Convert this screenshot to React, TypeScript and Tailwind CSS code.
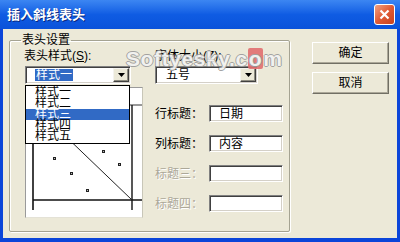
import React from 'react';

const FONT = "font-['Liberation_Sans','Noto_Sans_CJK_SC',sans-serif]";

const STYLES = ['样式一', '样式二', '样式三', '样式四', '样式五'];

const ROWS = [
  { label: '行标题：', value: '日期', disabled: false },
  { label: '列标题：', value: '内容', disabled: false },
  { label: '标题三：', value: '', disabled: true },
  { label: '标题四：', value: '', disabled: true },
];

function ArrowButton() {
  return (
    <div className="w-[16px] h-full shrink-0 bg-[#ECE9D8] border border-t-[#F4F3EE] border-l-[#F4F3EE] border-b-[#404040] border-r-[#404040] shadow-[inset_-1px_-1px_0_#8E8C80] flex items-center justify-center">
      <svg width="7" height="4" viewBox="0 0 7 4">
        <path d="M0 0h7L3.5 4z" fill="#000" />
      </svg>
    </div>
  );
}

function Combo({ width, children }: { width: string; children: React.ReactNode }) {
  return (
    <div
      className={`${width} h-[18px] bg-white border border-t-[#808080] border-l-[#808080] border-b-white border-r-white shadow-[inset_1px_1px_0_#404040,inset_-1px_-1px_0_#D4D0C8] p-[1px] flex items-stretch`}
    >
      <div className="flex-1 flex items-center text-[12px] leading-[12px]">{children}</div>
      <ArrowButton />
    </div>
  );
}

function Preview() {
  return (
    <svg width="116" height="129" viewBox="0 0 116 129" className="block">
      <line x1="7" y1="17" x2="116" y2="17" stroke="#333" strokeWidth="1" />
      <line x1="7" y1="17" x2="7" y2="122" stroke="#111" strokeWidth="1.6" />
      <line x1="106" y1="17" x2="106" y2="122" stroke="#111" strokeWidth="1.4" />
      <line x1="7" y1="112" x2="116" y2="112" stroke="#111" strokeWidth="1.4" />
      <line x1="7" y1="17" x2="106" y2="112" stroke="#222" strokeWidth="1" />
      {[
        [27, 69],
        [76, 62],
        [92, 75],
        [44, 84],
        [60, 101],
      ].map(([x, y], i) => (
        <g key={i} fill="#222">
          <rect x={x} y={y} width="3" height="3" />
          <rect x={x + 1} y={y + 1} width="1" height="1" fill="#bbb" />
        </g>
      ))}
    </svg>
  );
}

function Button({ children }: { children: React.ReactNode }) {
  return (
    <button className="w-[77px] h-[22px] bg-[#ECE9D8] border border-t-white border-l-white border-b-[#716F64] border-r-[#716F64] shadow-[inset_-1px_-1px_0_#ACA899] text-[12px] leading-[12px] text-black flex items-center justify-center">
      {children}
    </button>
  );
}

export default function App() {
  return (
    <div className={`${FONT} w-[400px] h-[242px] bg-[#0B45D9] flex flex-col overflow-hidden relative select-none`}>
      {/* title bar */}
      <div className="h-[29px] shrink-0 flex items-center justify-between pl-[7px] pr-[5px] bg-gradient-to-b from-[#3C86F2] via-[#0F5CE3] to-[#0A52DA]">
        <span className="text-white text-[13px] leading-[13px] font-bold [text-shadow:1px_1px_0_#0A2A80]">插入斜线表头</span>
        <div className="w-[21px] h-[21px] rounded-[3px] border border-white bg-gradient-to-br from-[#F0A080] via-[#E05A34] to-[#C8421F] flex items-center justify-center">
          <svg width="11" height="11" viewBox="0 0 11 11">
            <path d="M1.5 1.5l8 8M9.5 1.5l-8 8" stroke="white" strokeWidth="2.2" />
          </svg>
        </div>
      </div>

      {/* dialog body */}
      <div className="flex-1 mx-[3px] mb-[4px] bg-[#ECE9D8] flex items-start">
        <fieldset className="ml-[6px] mt-[4px] w-[281px] h-[199px] border border-[#A5A392] rounded-[2px] shadow-[inset_1px_1px_0_white,1px_1px_0_white]">
          <legend className="ml-[11px] px-[1px] text-[12px] leading-[14px] text-black">表头设置</legend>
          <div className="flex">
            {/* left column */}
            <div className="ml-[14px] w-[119px] flex flex-col">
              <div className="mt-[2px] h-[14px] text-[12px] leading-[14px]">
                表头样式(<u>S</u>):
              </div>
              <div className="relative mt-[3px] ml-[1px] z-10">
                <Combo width="w-[106px]">
                  <span className="ml-[8px] px-[1px] bg-[#316AC5] text-white leading-[12px]">样式一</span>
                </Combo>
                <ul className="absolute left-0 top-full mt-[1px] w-[105px] bg-white border border-black py-[0.5px]">
                  {STYLES.map((s) => (
                    <li
                      key={s}
                      className={`h-[11.2px] leading-[11px] text-[12px] pl-[9px] ${
                        s === '样式三' ? 'bg-[#316AC5] text-white' : 'text-black'
                      }`}
                    >
                      {s}
                    </li>
                  ))}
                </ul>
              </div>
              <div className="mt-[3px] ml-[1px] w-[118px] h-[131px] bg-white border border-t-[#9A9A9A] border-l-[#9A9A9A] border-b-[#E4E2D6] border-r-[#C8C6B8]">
                <Preview />
              </div>
            </div>

            {/* right column */}
            <div className="ml-[12px] flex flex-col">
              <div className="mt-[2px] h-[14px] text-[12px] leading-[14px]">
                字体大小(<u>Z</u>):
              </div>
              <div className="mt-[3px]">
                <Combo width="w-[103px]">
                  <span className="ml-[9px]">五号</span>
                </Combo>
              </div>
              <div className="mt-[21px] flex flex-col gap-[13px]">
                {ROWS.map((r) => (
                  <div key={r.label} className="h-[17px] flex items-center">
                    <span
                      className={`w-[54px] text-[12px] leading-[12px] ${
                        r.disabled ? 'text-[#ACA899] [text-shadow:1px_1px_0_white]' : 'text-black'
                      }`}
                    >
                      {r.label}
                    </span>
                    <div className="w-[74px] h-[17px] bg-white border border-t-[#808080] border-l-[#808080] border-b-white border-r-white shadow-[inset_1px_1px_0_#404040,inset_-1px_-1px_0_#D4D0C8] flex items-center pl-[9px] text-[12px] leading-[12px]">
                      {r.value}
                    </div>
                  </div>
                ))}
              </div>
            </div>
          </div>
        </fieldset>

        {/* buttons */}
        <div className="ml-[22px] mt-[13px] flex flex-col gap-[8px]">
          <Button>确定</Button>
          <Button>取消</Button>
        </div>
      </div>

      {/* watermark */}
      <div className="absolute left-[126px] top-[48px] pointer-events-none text-[21px] leading-[21px] tracking-[0.6px] font-bold font-['Liberation_Sans',sans-serif] text-[#F2F2F2] [text-shadow:-1px_0_#9A9A9A,1px_0_#9A9A9A,0_-1px_#9A9A9A,0_1px_#9A9A9A] opacity-90 flex items-center">
        <span>Softyesky.c</span>
        <span className="bg-[#E27070] rounded-[2px] px-[1px]">o</span>
        <span>m</span>
      </div>
    </div>
  );
}
